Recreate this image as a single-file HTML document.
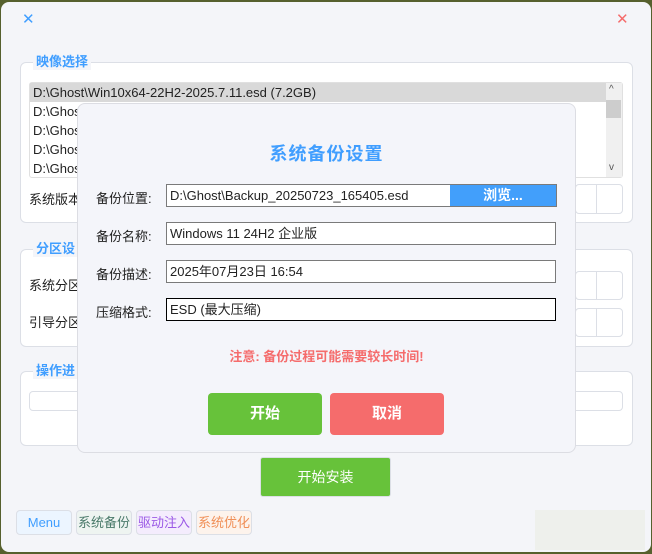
<html><head><style>
body{margin:0;width:652px;height:554px;background:#56602e;position:relative;overflow:hidden;font-family:"Liberation Sans","Noto Sans CJK SC",sans-serif;font-size:13px;color:#222}
.a{position:absolute;box-sizing:border-box}
.win{left:1px;top:2px;width:650px;height:550px;background:#f4f5f9;border-radius:8px}
.grp{border:1px solid #dcdfe6;border-radius:6px;background:#fff}
.gt{color:#409eff;font-weight:bold;font-size:13px;background:#f4f5f9;padding:0 3px}
.row{left:33px;font-size:13px;height:19px;line-height:19px}
.inp{background:#fff;border:1px solid #7a7a7a;height:23px;line-height:21px;padding-left:3px;font-size:13px}
.lb{left:96px;font-size:13px}
.bb{border:1px solid #dcdfe6;border-radius:4px;height:25px;line-height:23px;text-align:center;font-size:13px}
</style></head><body>
<div class="a win"></div>
<div class="a" style="left:22px;top:10px;color:#409eff;font-size:15px">✕</div>
<div class="a" style="left:616px;top:10px;color:#f56c6c;font-size:15px">✕</div>

<div class="a grp" style="left:20px;top:62px;width:613px;height:161px"></div>
<div class="a gt" style="left:33px;top:51px">映像选择</div>
<div class="a" style="left:29px;top:82px;width:594px;height:96px;background:#fff;border:1px solid #e0e0e0;border-radius:3px"></div>
<div class="a" style="left:30px;top:83px;width:576px;height:19px;background:#d9d9d9"></div>
<div class="a row" style="top:83px">D:\Ghost\Win10x64-22H2-2025.7.11.esd (7.2GB)</div>
<div class="a row" style="top:102px">D:\Ghost</div>
<div class="a row" style="top:121px">D:\Ghost</div>
<div class="a row" style="top:140px">D:\Ghost</div>
<div class="a row" style="top:159px">D:\Ghost</div>
<div class="a" style="left:606px;top:83px;width:16px;height:94px;background:#f0f0f0"></div>
<div class="a" style="left:606px;top:100px;width:15px;height:18px;background:#cdcdcd"></div>
<div class="a" style="left:609px;top:84px;font-size:10px;color:#555">^</div>
<div class="a" style="left:609px;top:162px;font-size:10px;color:#555">v</div>
<div class="a row" style="left:29px;top:190px">系统版本</div>
<div class="a" style="left:575px;top:184px;width:48px;height:30px;background:#fff;border:1px solid #dcdfe6;border-radius:4px"></div>
<div class="a" style="left:596px;top:185px;width:1px;height:28px;background:#dcdfe6"></div>

<div class="a grp" style="left:20px;top:249px;width:613px;height:98px"></div>
<div class="a gt" style="left:33px;top:238px">分区设</div>
<div class="a row" style="left:29px;top:276px">系统分区</div>
<div class="a row" style="left:29px;top:313px">引导分区</div>
<div class="a" style="left:575px;top:271px;width:48px;height:29px;background:#fff;border:1px solid #dcdfe6;border-radius:4px"></div>
<div class="a" style="left:575px;top:308px;width:48px;height:29px;background:#fff;border:1px solid #dcdfe6;border-radius:4px"></div>
<div class="a" style="left:596px;top:272px;width:1px;height:27px;background:#dcdfe6"></div>
<div class="a" style="left:596px;top:309px;width:1px;height:27px;background:#dcdfe6"></div>

<div class="a grp" style="left:20px;top:371px;width:613px;height:75px"></div>
<div class="a gt" style="left:33px;top:360px">操作进</div>
<div class="a" style="left:29px;top:391px;width:594px;height:20px;background:#fff;border:1px solid #dcdfe6;border-radius:4px"></div>

<div class="a" style="left:260px;top:457px;width:131px;height:40px;background:#67c23a;border:1px solid #dcdfe6;border-radius:3px;color:#fff;font-size:14px;text-align:center;line-height:38px">开始安装</div>
<div class="a bb" style="left:16px;top:510px;width:56px;background:#ecf5ff;color:#409eff">Menu</div>
<div class="a bb" style="left:76px;top:510px;width:56px;background:#eef4f1;color:#4a7a6a">系统备份</div>
<div class="a bb" style="left:136px;top:510px;width:56px;background:#f4ecfd;color:#9b59e6">驱动注入</div>
<div class="a bb" style="left:196px;top:510px;width:56px;background:#fdf3ec;color:#f09058">系统优化</div>
<div class="a" style="left:535px;top:510px;width:110px;height:40px;background:#eef0ec"></div>

<div class="a" style="left:77px;top:103px;width:499px;height:350px;background:#f4f5fa;border:1px solid #dcdde3;border-radius:8px"></div>
<div class="a" style="left:77px;top:140px;width:499px;text-align:center;color:#409eff;font-size:18px;font-weight:bold;letter-spacing:1px">系统备份设置</div>
<div class="a lb" style="top:188px">备份位置:</div>
<div class="a inp" style="left:166px;top:184px;width:391px">D:\Ghost\Backup_20250723_165405.esd</div>
<div class="a" style="left:450px;top:185px;width:106px;height:21px;background:#429ffb;color:#fff;font-size:14px;font-weight:bold;text-align:center;line-height:21px">浏览...</div>
<div class="a lb" style="top:226px">备份名称:</div>
<div class="a inp" style="left:166px;top:222px;width:390px">Windows 11 24H2 企业版</div>
<div class="a lb" style="top:264px">备份描述:</div>
<div class="a inp" style="left:166px;top:260px;width:390px">2025年07月23日 16:54</div>
<div class="a lb" style="top:302px">压缩格式:</div>
<div class="a inp" style="left:166px;top:298px;width:390px;border-color:#000">ESD (最大压缩)</div>
<div class="a" style="left:77px;top:346px;width:499px;text-align:center;color:#f56c6c;font-size:13px;font-weight:bold">注意: 备份过程可能需要较长时间!</div>
<div class="a" style="left:208px;top:393px;width:114px;height:42px;background:#67c23a;border-radius:4px;color:#fff;font-size:15px;font-weight:bold;text-align:center;line-height:42px">开始</div>
<div class="a" style="left:330px;top:393px;width:114px;height:42px;background:#f56c6c;border-radius:4px;color:#fff;font-size:15px;font-weight:bold;text-align:center;line-height:42px">取消</div>
</body></html>
